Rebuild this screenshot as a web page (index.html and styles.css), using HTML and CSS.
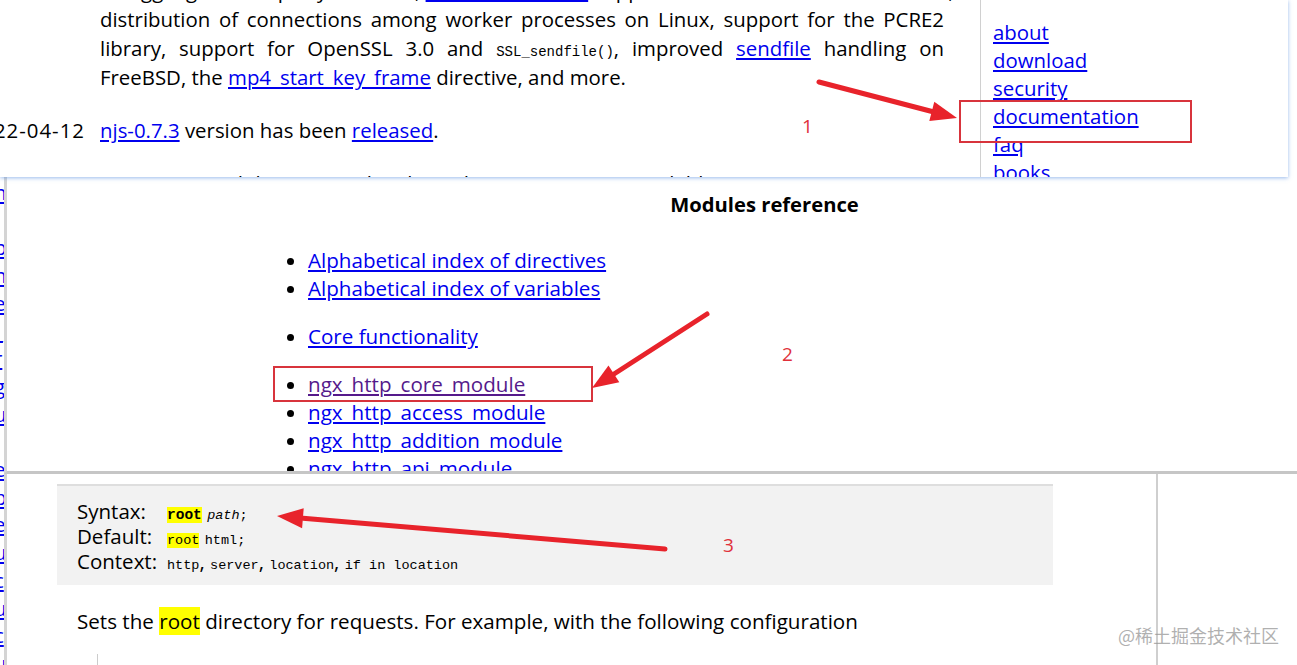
FILE: index.html
```html
<!DOCTYPE html>
<html lang="en">
<head>
  <meta charset="UTF-8">
  <title>nginx root directive</title>
  <link rel="stylesheet" href="styles.css">
</head>
<body>
  <div class="shot news-shot">
    <div class="news">
      <div class="entry first">
        <div class="date">2022-05-24</div>
        <p class="text lines">
          <span>smuggling in third-party modules, <a href="#">EPOLLEXCLUSIVE</a> support for a more even and uniform,</span>
          <span>distribution of connections among worker processes on Linux, support for the PCRE2</span>
          <span>library, support for OpenSSL 3.0 and <code>SSL_sendfile()</code>, improved <a href="#">sendfile</a> handling on</span>
          <span>FreeBSD, the <a href="#">mp4_start_key_frame</a> directive, and more.</span>
        </p>
      </div>
      <div class="entry">
        <div class="date">2022-04-12</div>
        <p class="text"><a href="#">njs-0.7.3</a> version has been <a href="#">released</a>.</p>
      </div>
      <div class="entry">
        <div class="date">2022-01-25</div>
        <p class="text"><a href="#">unit-1.26.1</a> and the previously released version are now available.</p>
      </div>
    </div>
    <div class="sidebar">
      <a href="#">about</a>
      <a href="#">download</a>
      <a href="#">security</a>
      <a href="#">documentation</a>
      <a href="#">faq</a>
      <a href="#">books</a>
      <a href="#">support</a>
    </div>
  </div>

  <div class="lower">
    <div class="strip">
      <a href="#">n</a><a href="#">l</a><a href="#">p</a><a href="#">n</a><a href="#">e</a><a href="#">_</a>
      <a href="#">r</a><a href="#">g</a><a href="#">u</a><a href="#">l</a><a href="#">e</a><a href="#">b</a>
      <a href="#">e</a><a href="#">u</a><a href="#">c</a><a href="#">u</a><a href="#">c</a><a href="#">u</a>
    </div>
    <div class="stack">
      <div class="shot modules-shot">
        <div class="doc">
          <h2>Modules reference</h2>
          <ul>
            <li><a href="#">Alphabetical index of directives</a></li>
            <li><a href="#">Alphabetical index of variables</a></li>
          </ul>
          <ul>
            <li><a href="#">Core functionality</a></li>
          </ul>
          <ul>
            <li><a href="#" class="visited">ngx_http_core_module</a></li>
            <li><a href="#">ngx_http_access_module</a></li>
            <li><a href="#">ngx_http_addition_module</a></li>
            <li><a href="#">ngx_http_api_module</a></li>
            <li><a href="#">ngx_http_auth_basic_module</a></li>
          </ul>
        </div>
      </div>
      <div class="shot directive-shot">
        <div class="directive">
          <div class="label">Syntax:</div>
          <div class="value"><code class="hl kw">root</code> <code class="arg">path</code><code>;</code></div>
          <div class="label">Default:</div>
          <div class="value"><code class="hl">root</code> <code>html;</code></div>
          <div class="label">Context:</div>
          <div class="value"><code>http</code>, <code>server</code>, <code>location</code>, <code>if in location</code></div>
        </div>
        <p class="desc">Sets the <span class="hl">root</span> directory for requests. For example, with the following configuration</p>
        <pre class="example">location /i/ {</pre>
      </div>
    </div>
  </div>

  <div class="watermark">@稀土掘金技术社区</div>

  <svg class="marks" width="1297" height="665" viewBox="0 0 1297 665">
    <rect x="960" y="101" width="231" height="41" class="box"/>
    <line x1="819" y1="82" x2="932" y2="111.5" class="shaft"/>
    <polygon points="957,118 929.3,121.1 934.3,101.8" class="head"/>
    <text x="802" y="133" class="num">1</text>

    <rect x="274" y="367" width="318" height="34" class="box"/>
    <line x1="707" y1="314" x2="614" y2="374" class="shaft"/>
    <polygon points="592,388 608.5,365.5 619.3,382.3" class="head"/>
    <text x="782" y="361" class="num">2</text>

    <line x1="665" y1="549" x2="303" y2="518.2" class="shaft"/>
    <polygon points="277,516 303.7,508.2 302.1,528.2" class="head"/>
    <text x="723" y="552" class="num">3</text>
  </svg>
</body>
</html>
```

FILE: styles.css
```css
body {
  margin: 0;
  width: 1297px;
  height: 665px;
  overflow: hidden;
  position: relative;
  background-color: #fff;
  color: #000;
  font-family: 'Open Sans', 'Noto Sans', sans-serif;
  font-size: 20.4px;
}
a {
  color: #0000ee;
}
a.visited {
  color: #551a8b;
}
code {
  font-family: 'Liberation Mono', monospace;
  font-size: 14px;
  line-height: 1;
}
.shot {
  background-color: #fff;
  box-sizing: border-box;
  overflow: hidden;
}

/* first screenshot: news + sidebar */
.news-shot {
  display: flex;
  width: 1288px;
  height: 177px;
  position: relative;
  z-index: 2;
  box-shadow: 0 1px 4px rgba(70, 130, 220, 0.55);
}
.news {
  width: 980px;
  flex-shrink: 0;
  padding-right: 36px;
  box-sizing: border-box;
}
.entry {
  display: flex;
  gap: 15px;
  margin-bottom: 24px;
}
.entry.first {
  margin-top: -24px;
}
.date {
  width: 85px;
  flex-shrink: 0;
  display: flex;
  justify-content: flex-end;
  white-space: nowrap;
  line-height: 29px;
  letter-spacing: 1px;
}
.text {
  width: 844px;
  margin: 0;
  line-height: 29px;
}
.lines span {
  display: block;
  height: 29px;
  text-align: justify;
  text-align-last: justify;
  white-space: nowrap;
}
.lines span:last-child {
  text-align-last: auto;
}
.sidebar {
  display: flex;
  flex-direction: column;
  align-items: flex-start;
  border-left: 1px solid #d0d0d0;
  padding: 18px 0 0 12px;
  line-height: 28px;
}

/* left edge: links of a window behind */
.lower {
  display: flex;
  height: 488px;
}
.strip {
  width: 4px;
  flex-shrink: 0;
  overflow: hidden;
  display: flex;
  flex-direction: column;
  padding-top: 2px;
  line-height: 27.7px;
}
.strip a {
  margin-left: -6px;
}
.stack {
  display: flex;
  flex-direction: column;
  width: 1293px;
}

/* second screenshot: modules reference */
.modules-shot {
  height: 297px;
  border-left: 3px solid #d4d4d4;
  border-bottom: 3px solid #c6c6c6;
  padding-top: 15px;
}
.doc {
  margin-left: 261px;
  width: 993px;
}
.doc h2 {
  margin: 0 0 30px;
  text-align: center;
  font-size: 20.2px;
  line-height: 24px;
}
.doc ul {
  margin: 0 0 20px;
  padding-left: 40px;
  line-height: 28px;
  font-size: 20.6px;
}

/* third screenshot: root directive */
.directive-shot {
  width: 1154px;
  flex: 1;
  border-left: 3px solid #d4d4d4;
  border-right: 2px solid #cfcfcf;
  padding-top: 10px;
}
.directive {
  display: grid;
  grid-template-columns: 90px auto;
  grid-auto-rows: 25px;
  align-items: center;
  margin-left: 50px;
  width: 996px;
  box-sizing: border-box;
  padding: 13px 0 11px 20px;
  background-color: #f2f2f2;
  border-top: 2px solid #dedede;
  font-size: 20.5px;
  line-height: 25px;
}
.directive code {
  font-size: 13.5px;
}
.hl {
  background-color: #ffff00;
}
.directive .kw {
  font-weight: bold;
  font-size: 14.5px;
}
.directive .arg {
  font-style: italic;
}
.desc {
  margin: 22px 0 0 70px;
  line-height: 28px;
  font-size: 20.6px;
}
.example {
  margin: 19px 0 0 90px;
  padding-left: 20px;
  height: 60px;
  border-left: 1px solid #cccccc;
  color: #fff;
}

.watermark {
  position: absolute;
  left: 1118px;
  top: 622px;
  font-family: 'Noto Sans CJK SC', sans-serif;
  font-size: 18px;
  color: rgba(150, 150, 150, 0.75);
  z-index: 6;
}
.marks {
  position: absolute;
  left: 0;
  top: 0;
  z-index: 5;
  pointer-events: none;
}
.marks .box {
  fill: none;
  stroke: #d8343c;
  stroke-width: 2;
}
.marks .shaft {
  stroke: #e8232b;
  stroke-width: 5;
  stroke-linecap: round;
}
.marks .head {
  fill: #e8232b;
}
.marks .num {
  fill: #e0303a;
  font-family: 'Open Sans', sans-serif;
  font-size: 19px;
}
```
